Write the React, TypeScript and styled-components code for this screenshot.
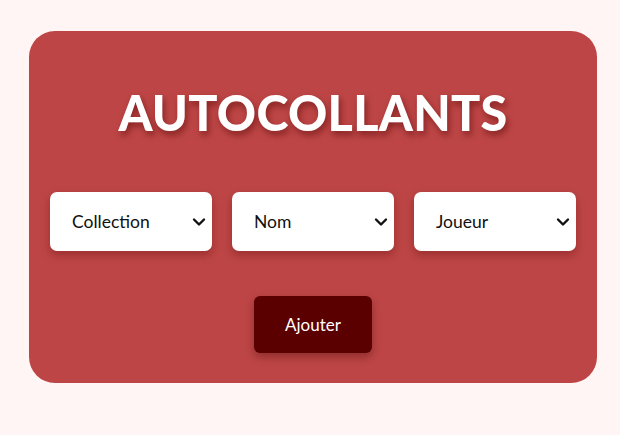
import React from "react";
import styled, { createGlobalStyle } from "styled-components";

const Global = createGlobalStyle`
  html, body { margin: 0; padding: 0; background: #fff5f5; }
  body { font-family: "Lato", "Noto Sans", sans-serif; }
`;

const Page = styled.div`
  padding: 31px 23px 0 29px;
  width: 620px;
  box-sizing: border-box;
`;

const Card = styled.div`
  width: 568px;
  height: 352px;
  box-sizing: border-box;
  background: #bd4545;
  border-radius: 26px;
  display: flex;
  flex-direction: column;
  align-items: center;
  padding: 0 21px;
`;

const Title = styled.h1`
  margin: 0;
  margin-top: 41px;
  height: 80px;
  display: flex;
  align-items: center;
  color: #fff;
  font-family: "Lato", sans-serif;
  font-weight: 900;
  font-size: 48.5px;
  letter-spacing: 0.3px;
  text-shadow: 2px 4px 6px rgba(90, 10, 10, 0.55);
`;

const Row = styled.div`
  display: flex;
  gap: 20px;
  width: 100%;
  margin-top: 40px;
`;

const Select = styled.div`
  flex: 1;
  height: 59px;
  background: #fff;
  border-radius: 7px;
  box-shadow: 0 4px 8px rgba(90, 10, 10, 0.35);
  display: flex;
  align-items: center;
  justify-content: space-between;
  padding: 0 6px 0 22px;
  font-size: 17.5px;
  color: #111;
`;

const Button = styled.button`
  margin-top: 45px;
  width: 118px;
  height: 57px;
  background: #5a0000;
  color: #fff;
  border: none;
  border-radius: 6px;
  font-family: "Lato", sans-serif;
  font-size: 17px;
  box-shadow: 0 4px 8px rgba(60, 0, 0, 0.35);
`;

const Chevron = () => (
  <svg width="14" height="10" viewBox="0 0 14 10">
    <path d="M2 2.5 L7 7.5 L12 2.5" fill="none" stroke="#111" strokeWidth="2.4" strokeLinecap="round" strokeLinejoin="round" />
  </svg>
);

export default function App() {
  return (
    <Page>
      <Global />
      <Card>
        <Title>AUTOCOLLANTS</Title>
        <Row>
          {["Collection", "Nom", "Joueur"].map((l) => (
            <Select key={l}>
              <span>{l}</span>
              <Chevron />
            </Select>
          ))}
        </Row>
        <Button>Ajouter</Button>
      </Card>
    </Page>
  );
}
